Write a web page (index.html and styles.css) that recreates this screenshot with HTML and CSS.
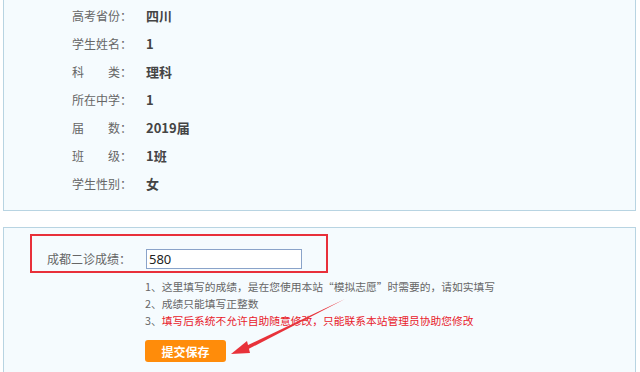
FILE: index.html
```html
<!DOCTYPE html>
<html>
<head>
<meta charset="utf-8">
<link rel="stylesheet" href="styles.css">
</head>
<body>
<div class="page">
  <div class="panel info">
    <div class="row"><span class="lbl">高考省份：</span><span class="val">四川</span></div>
    <div class="row"><span class="lbl">学生姓名：</span><span class="val">1</span></div>
    <div class="row"><span class="lbl">科　　类：</span><span class="val">理科</span></div>
    <div class="row"><span class="lbl">所在中学：</span><span class="val">1</span></div>
    <div class="row"><span class="lbl">届　　数：</span><span class="val">2019届</span></div>
    <div class="row"><span class="lbl">班　　级：</span><span class="val">1班</span></div>
    <div class="row"><span class="lbl">学生性别：</span><span class="val">女</span></div>
  </div>
  <div class="panel score">
    <div class="hl">
      <span class="slbl">成都二诊成绩：</span>
      <input class="inp" type="text" value="580">
    </div>
    <div class="notes">
      <div class="note">1、这里填写的成绩，是在您使用本站“模拟志愿”时需要的，请如实填写</div>
      <div class="note">2、成绩只能填写正整数</div>
      <div class="note">3、<span class="red">填写后系统不允许自助随意修改，只能联系本站管理员协助您修改</span></div>
      <button class="btn">提交保存</button>
    </div>
  </div>
</div>
<svg class="arrow" width="640" height="372" viewBox="0 0 640 372">
  <polygon points="345,299 246,346 247.5,349.5" fill="#e8323a"/>
  <polygon points="231,354 247,341 250,353" fill="#e8323a"/>
</svg>
</body>
</html>
```
FILE: styles.css
```css
html, body {
  margin: 0;
  padding: 0;
  background: #ffffff;
  font-family: "Noto Sans CJK SC", "Noto Sans", sans-serif;
  overflow: hidden;
}
.page {
  padding: 0 4px 0 3px;
  display: flex;
  flex-direction: column;
  gap: 16px;
}
.panel {
  background: #f5fbfe;
  border: 1px solid #b8d4e2;
}
.info {
  border-top: none;
  padding: 1px 0 13px 68px;
}
.row {
  height: 28px;
  display: flex;
  align-items: center;
}
.lbl {
  width: 74px;
  font-size: 12px;
  color: #666666;
}
.val {
  font-size: 13px;
  font-weight: bold;
  color: #444444;
}
.score {
  padding: 6px 0 20px 26px;
  height: 150px;
}
.hl {
  width: 298px;
  height: 39px;
  border: 2px solid #e8303a;
  display: flex;
  align-items: center;
  padding-top: 10px;
  box-sizing: border-box;
}
.slbl {
  font-size: 12px;
  color: #666666;
  margin-left: 15px;
  width: 99px;
}
.inp {
  width: 156px;
  height: 20px;
  box-sizing: border-box;
  border: 1px solid #8aa3c9;
  padding: 0 2px;
  font-family: "Noto Sans", sans-serif;
  font-size: 13px;
  color: #222222;
  background: #ffffff;
  outline: none;
}
.notes {
  margin-left: 115px;
  padding-top: 5px;
  display: flex;
  flex-direction: column;
  align-items: flex-start;
}
.note {
  font-size: 10.75px;
  line-height: 17px;
  color: #666666;
}
.red {
  color: #e8202a;
}
.btn {
  margin-top: 11px;
  width: 81px;
  height: 22px;
  border: none;
  border-radius: 3px;
  background: #ff8c0a;
  color: #ffffff;
  font-family: "Noto Sans CJK SC", sans-serif;
  font-size: 12px;
  font-weight: bold;
  padding: 0;
}
.arrow {
  position: absolute;
  left: 0;
  top: 0;
  pointer-events: none;
}
```
